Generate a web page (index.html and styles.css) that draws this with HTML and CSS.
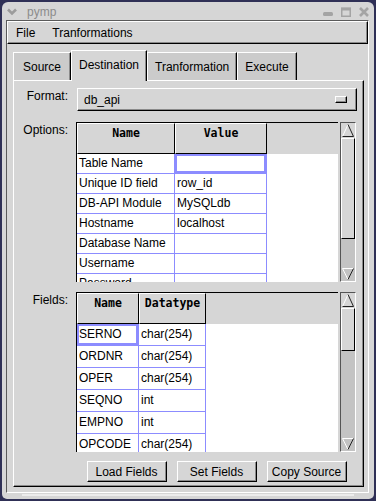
FILE: index.html
```html
<!DOCTYPE html>
<html lang="en">
<head>
  <meta charset="UTF-8">
  <title>pymp</title>
  <link rel="stylesheet" href="styles.css">
</head>
<body>
  <div class="window">
    <div class="titlebar">
      <svg class="tb-menu" width="10" height="8" viewBox="0 0 10 8">
        <path d="M1 1.5 L5 5.5 L9 1.5" fill="none" stroke="#9c9c9c" stroke-width="2.6"/>
      </svg>
      <span class="title">pymp</span>
      <div class="tb-buttons">
        <svg width="10" height="10" viewBox="0 0 10 10"><rect x="0" y="5" width="10" height="4" rx="1.5" fill="#a4a4a4"/></svg>
        <svg width="10" height="10" viewBox="0 0 10 10"><rect x="0.75" y="1.5" width="8.5" height="7.75" fill="none" stroke="#a4a4a4" stroke-width="1.5"/><rect x="0" y="0.5" width="10" height="3" fill="#a4a4a4"/></svg>
        <svg width="10" height="10" viewBox="0 0 10 10"><path d="M1 1 L9 9 M9 1 L1 9" stroke="#a4a4a4" stroke-width="2.6"/></svg>
      </div>
    </div>

    <div class="client">
      <div class="menubar">
        <span>File</span>
        <span>Tranformations</span>
      </div>

      <div class="notebook">
        <div class="tabs">
          <div class="tab">Source</div>
          <div class="tab active">Destination</div>
          <div class="tab">Tranformation</div>
          <div class="tab">Execute</div>
        </div>

        <div class="page">
          <div class="form-row format-row">
            <label>Format:</label>
            <div class="combo">
              <span>db_api</span>
              <span class="combo-ind"></span>
            </div>
          </div>

          <div class="form-row list-block">
            <label>Options:</label>
            <div class="list-box">
              <div class="list options">
                <div class="list-head">
                  <div class="col c1">Name</div>
                  <div class="col c2">Value</div>
                </div>
                <div class="list-row"><div class="cell c1">Table Name</div><div class="cell c2 sel"></div></div>
                <div class="list-row"><div class="cell c1">Unique ID field</div><div class="cell c2">row_id</div></div>
                <div class="list-row"><div class="cell c1">DB-API Module</div><div class="cell c2">MySQLdb</div></div>
                <div class="list-row"><div class="cell c1">Hostname</div><div class="cell c2">localhost</div></div>
                <div class="list-row"><div class="cell c1">Database Name</div><div class="cell c2"></div></div>
                <div class="list-row"><div class="cell c1">Username</div><div class="cell c2"></div></div>
                <div class="list-row"><div class="cell c1">Password</div><div class="cell c2"></div></div>
              </div>
              <div class="scrollbar">
                <div class="sb-up">
                  <svg width="14" height="15" viewBox="0 0 14 15">
                    <polygon points="1.5,13.5 7,1.5 12.5,13.5" fill="#d6d6d6"/>
                    <path d="M1.5 13.5 L7 1.5" stroke="#fff" stroke-width="1"/>
                    <path d="M7 1.5 L12.5 13.5 L1.5 13.5" fill="none" stroke="#222" stroke-width="1"/>
                  </svg>
                </div>
                <div class="sb-thumb" style="height: 101px"></div>
                <div class="sb-trough"></div>
                <div class="sb-down">
                  <svg width="14" height="14" viewBox="0 0 14 14">
                    <path d="M1.5 1.5 L12.5 1.5 M1.5 1.5 L7 12.5" fill="none" stroke="#fff" stroke-width="1"/>
                    <path d="M7 12.5 L12.5 1.5" stroke="#222" stroke-width="1"/>
                  </svg>
                </div>
              </div>
            </div>
          </div>

          <div class="form-row list-block">
            <label>Fields:</label>
            <div class="list-box">
              <div class="list fields">
                <div class="list-head">
                  <div class="col c1">Name</div>
                  <div class="col c2">Datatype</div>
                </div>
                <div class="list-row"><div class="cell c1 sel">SERNO</div><div class="cell c2">char(254)</div></div>
                <div class="list-row"><div class="cell c1">ORDNR</div><div class="cell c2">char(254)</div></div>
                <div class="list-row"><div class="cell c1">OPER</div><div class="cell c2">char(254)</div></div>
                <div class="list-row"><div class="cell c1">SEQNO</div><div class="cell c2">int</div></div>
                <div class="list-row"><div class="cell c1">EMPNO</div><div class="cell c2">int</div></div>
                <div class="list-row"><div class="cell c1">OPCODE</div><div class="cell c2">char(254)</div></div>
              </div>
              <div class="scrollbar">
                <div class="sb-up">
                  <svg width="14" height="15" viewBox="0 0 14 15">
                    <polygon points="1.5,13.5 7,1.5 12.5,13.5" fill="#d6d6d6"/>
                    <path d="M1.5 13.5 L7 1.5" stroke="#fff" stroke-width="1"/>
                    <path d="M7 1.5 L12.5 13.5 L1.5 13.5" fill="none" stroke="#222" stroke-width="1"/>
                  </svg>
                </div>
                <div class="sb-thumb" style="height: 43px"></div>
                <div class="sb-trough"></div>
                <div class="sb-down">
                  <svg width="14" height="14" viewBox="0 0 14 14">
                    <path d="M1.5 1.5 L12.5 1.5 M1.5 1.5 L7 12.5" fill="none" stroke="#fff" stroke-width="1"/>
                    <path d="M7 12.5 L12.5 1.5" stroke="#222" stroke-width="1"/>
                  </svg>
                </div>
              </div>
            </div>
          </div>

          <div class="button-row">
            <button>Load Fields</button>
            <button>Set Fields</button>
            <button>Copy Source</button>
          </div>
        </div>
      </div>
    </div>
    <div class="frame-bottom"></div>
  </div>
</body>
</html>
```

FILE: styles.css
```css
* {
  box-sizing: border-box;
}
body {
  margin: 0;
  width: 376px;
  height: 501px;
  overflow: hidden;
  background: #2f3056;
  font-family: "Liberation Sans", Arial, sans-serif;
  font-size: 12px;
  color: #000;
}

/* window frame */
.window {
  margin: 2px 0 0 2px;
  width: 372px;
  height: 497px;
  background: #d6d6d6;
  border-radius: 6px 6px 5px 5px;
}
.titlebar {
  height: 18px;
  display: flex;
  align-items: center;
  padding: 2px 5px 0 5px;
}
.title {
  margin-left: 10px;
  color: #8c8c8c;
}
.tb-buttons {
  margin-left: auto;
  display: flex;
  gap: 8px;
}
.client {
  margin: 0 5px 0 4px;
  height: 473px;
  border: 1px solid;
  border-color: #5a5a5a #fff #fff #5a5a5a;
}
.frame-bottom {
  height: 2px;
  margin: 1px 20px 0;
  background: #ececec;
}

/* menu */
.menubar {
  height: 23px;
  display: flex;
  align-items: center;
  gap: 17px;
  padding-left: 8px;
  border: 1px solid;
  border-color: #fff #000 #000 #fff;
  box-shadow: inset -1px -1px #8a8a8a;
}

/* notebook */
.notebook {
  margin: 6px 4px 0 6px;
}
.tabs {
  display: flex;
  align-items: flex-end;
  height: 30px;
}
.tab {
  min-width: 58px;
  height: 28px;
  padding: 7px 7px 0;
  line-height: 14px;
  text-align: center;
  background: #cbcbcb;
  border: 1px solid;
  border-color: #fff #000 transparent #fff;
  border-bottom: none;
  box-shadow: inset -1px 0 #8a8a8a;
}
.tab.active {
  height: 31px;
  margin-bottom: -1px;
  background: #d6d6d6;
  position: relative;
  z-index: 1;
}
.page {
  height: 407px;
  padding: 7px 6px 0 0;
  border: 1px solid;
  border-color: #fff #000 #000 #fff;
  box-shadow: inset -1px -1px #8a8a8a;
}

.form-row {
  display: flex;
  gap: 8px;
}
.form-row label {
  flex: 0 0 54px;
  text-align: right;
  padding-top: 1px;
  line-height: 14px;
}
.format-row {
  margin-bottom: 11px;
}
.list-block {
  margin-bottom: 10px;
}
.list-block + .button-row {
  margin-top: -1px;
}

/* option menu */
.combo {
  flex: 1;
  margin-left: 1px;
  height: 23px;
  display: flex;
  align-items: center;
  justify-content: space-between;
  padding: 0 9px 0 6px;
  border: 1px solid;
  border-color: #fff #000 #000 #fff;
  box-shadow: inset -1px -1px #8a8a8a;
}
.combo-ind {
  width: 12px;
  height: 7px;
  margin-top: -1px;
  border: 1px solid;
  border-color: #fff #000 #000 #fff;
  box-shadow: inset -1px -1px #8a8a8a;
}

/* column lists */
.list-box {
  flex: 1;
  display: flex;
  gap: 2px;
  height: 160px;
}
.list {
  width: 262px;
  height: 160px;
  overflow: hidden;
  background: #fff;
  border-top: 1px solid #000;
  border-left: 1px solid #000;
}
.list-head {
  display: flex;
  background: #d6d6d6;
}
.list-head .col {
  height: 31px;
  padding-top: 2px;
  line-height: 14px;
  text-align: center;
  font-family: "DejaVu Sans Mono", monospace;
  font-weight: bold;
  font-size: 11.5px;
  border: 1px solid;
  border-color: #fff #000 #000 #fff;
}
.list-row {
  display: flex;
}
.cell {
  height: 20px;
  line-height: 19px;
  padding: 0 2px;
  white-space: nowrap;
  overflow: hidden;
  border-right: 1px solid #8c8cff;
  border-bottom: 1px solid #8c8cff;
}
.fields .cell {
  height: 22px;
  line-height: 21px;
}
.cell.sel {
  box-shadow: inset 0 0 0 2px #8c8cff;
}
.options .c1 { width: 98px; }
.options .c2 { width: 92px; }
.fields .c1 { width: 62px; }
.fields .c2 { width: 67px; }

/* scrollbars */
.scrollbar {
  width: 16px;
  height: 160px;
  display: flex;
  flex-direction: column;
  background: #c3c3c3;
  border: 1px solid;
  border-color: #555 #fff #fff #555;
}
.sb-up {
  height: 15px;
  background: #d6d6d6;
}
.sb-up svg,
.sb-down svg {
  display: block;
}
.sb-thumb {
  background: #d6d6d6;
  border: 1px solid;
  border-color: #fff #000 #000 #fff;
}
.sb-trough {
  flex: 1;
}
.sb-down {
  height: 14px;
}

/* buttons */
.button-row {
  display: flex;
  justify-content: center;
  gap: 10px;
  padding-left: 62px;
}
button {
  width: 80px;
  height: 21px;
  padding: 0;
  font-family: inherit;
  font-size: 12px;
  color: #000;
  background: #d6d6d6;
  border: 1px solid;
  border-color: #fff #000 #000 #fff;
  box-shadow: inset -1px -1px #8a8a8a;
}
```
